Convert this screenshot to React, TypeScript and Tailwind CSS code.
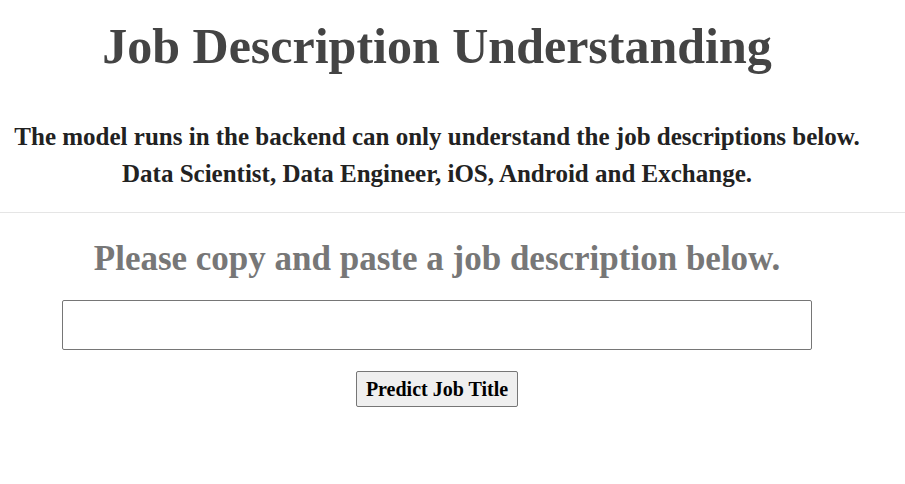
import React from 'react';

const App: React.FC = () => {
  return (
    <div className="min-h-screen bg-white font-['Liberation_Serif','Times_New_Roman',serif]">
      <div className="w-[874px] text-center">
        <h1 className="pt-[18px] text-[50px] leading-[56px] font-bold text-[#444444]">
          Job Description Understanding
        </h1>
        <div className="mt-[44px] text-[25px] leading-[37px] font-bold text-[#222222]">
          <p>The model runs in the backend can only understand the job descriptions below.</p>
          <p>Data Scientist, Data Engineer, iOS, Android and Exchange.</p>
        </div>
      </div>

      <hr className="mt-[20px] border-t border-[#e5e5e5]" />

      <div className="w-[874px] flex flex-col items-center">
        <h2 className="mt-[26px] text-[35px] leading-[40px] font-bold text-[#777777]">
          Please copy and paste a job description below.
        </h2>
        <input
          type="text"
          className="mt-[21px] w-[750px] h-[50px] border border-[#767676] rounded-[2px] bg-white px-2 outline-none"
        />
        <button className="mt-[21px] h-[36px] px-[9px] border border-[#767676] rounded-[2px] bg-[#efefef] text-[20px] font-bold text-black">
          Predict Job Title
        </button>
      </div>
    </div>
  );
};

export default App;
